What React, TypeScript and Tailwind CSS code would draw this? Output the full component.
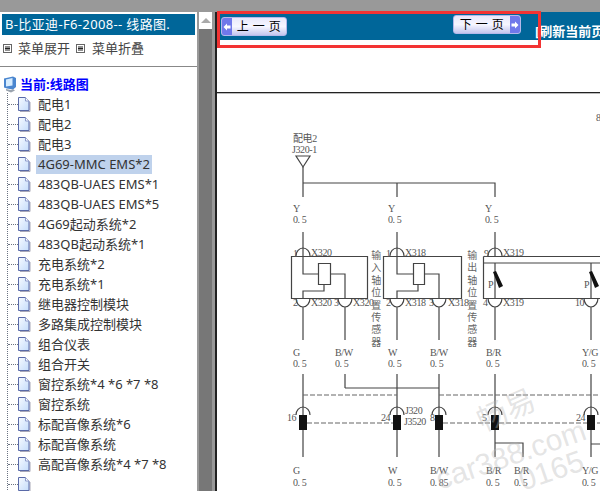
const cjk = "font-['Tahoma','Noto_Sans','Noto_Sans_CJK_SC',sans-serif]"

const treeItems = [
  "配电1",
  "配电2",
  "配电3",
  "4G69-MMC EMS*2",
  "483QB-UAES EMS*1",
  "483QB-UAES EMS*5",
  "4G69起动系统*2",
  "483QB起动系统*1",
  "充电系统*2",
  "充电系统*1",
  "继电器控制模块",
  "多路集成控制模块",
  "组合仪表",
  "组合开关",
  "窗控系统*4 *6 *7 *8",
  "窗控系统",
  "标配音像系统*6",
  "标配音像系统",
  "高配音像系统*4 *7 *8",
  "",
]

function MenuIcon() {
  return (
    <svg width="9" height="9" viewBox="0 0 9 9" className="shrink-0">
      <rect x="0.5" y="0.5" width="8" height="8" fill="#fff" stroke="#666" />
      <path d="M2 3h5M2 4.500h5M2 6h5" stroke="#222" />
    </svg>
  )
}

function DocIcon() {
  return (
    <svg width="13" height="15" viewBox="0 0 13 15" className="shrink-0">
      <defs>
        <linearGradient id="docFill" x1="0" y1="0" x2="1" y2="1">
          <stop offset="0" stopColor="#f6faff" />
          <stop offset="1" stopColor="#c4dcfb" />
        </linearGradient>
      </defs>
      <path d="M2 14.500h10V5" fill="none" stroke="#a9a9b8" />
      <path d="M0.500 0.500h7l3.500 3.500v9.500h-10.500z" fill="url(#docFill)" stroke="#5a6aa8" />
      <path d="M7.500 0.500v3.500h3.500" fill="#fff" stroke="#8f9ccc" />
    </svg>
  )
}

function RootIcon() {
  return (
    <svg width="14" height="17" viewBox="0 0 14 17" className="shrink-0">
      <path d="M1 2.500l9-2 3 1.500v9l-3 2.500-6-1-3-1z" fill="#4a86cf" />
      <path d="M3 3.500l6.500-1.500v7.500l-6.500 1z" fill="#d6ecff" />
      <path d="M3 13l5 1 2-1 2 1.500-4 2-5-2z" fill="#9aa3ae" />
    </svg>
  )
}

function TreeRow({ label, selected }: { label: string; selected: boolean }) {
  return (
    <div className="flex h-5 items-center">
      <div className="w-[10px] border-t border-dotted border-gray-500" />
      <DocIcon />
      <span className={`ml-[5px] px-[2px] text-[13px] leading-[19px] whitespace-nowrap text-[#333] ${selected ? "bg-[#bfd2ec]" : ""}`}>
        {label}
      </span>
    </div>
  )
}

function Sidebar() {
  return (
    <div className={`w-[197px] shrink-0 overflow-hidden bg-white pt-[2px] ${cjk}`}>
      <div className="mx-[2px] h-[21px] w-[193px] bg-[#006699] pl-[3px] text-[13px] leading-[21px] tracking-[0.35px] whitespace-nowrap text-white">
        B-比亚迪-F6-2008-- 线路图.
      </div>
      <div className="flex h-[27px] items-center pl-[3px] text-[13px] text-[#444]">
        <MenuIcon />
        <span className="ml-[6px]">菜单展开</span>
        <span className="ml-[6px]"><MenuIcon /></span>
        <span className="ml-[7px]">菜单折叠</span>
      </div>
      <div className="mt-[4px] h-[1px] bg-[#888]" />
      <div className="mt-[9px] flex h-[17px] items-center pl-[3px]">
        <RootIcon />
        <span className="ml-[3px] text-[13px] font-bold text-[#0000ff]">当前:线路图</span>
      </div>
      <div className="ml-[7px] border-l border-dotted border-gray-500 pt-[1px]">
        {treeItems.map((item, i) => (
          <TreeRow key={i} label={item} selected={i === 3} />
        ))}
      </div>
    </div>
  )
}

function Scrollbar() {
  return (
    <div className="flex w-[18px] shrink-0 bg-[#999]">
      <div className="ml-[2px] flex w-[13px] flex-col bg-white">
        <div className="flex h-[17px] items-center justify-center">
          <div className="h-0 w-0 border-x-[5px] border-b-[5px] border-x-transparent border-b-[#aaa]" />
        </div>
        <div className="flex-1 bg-[#777]" />
      </div>
    </div>
  )
}

function PageButton({ label, dir }: { label: string; dir: "prev" | "next" }) {
  const arrow = (
    <div className="flex h-full w-[10px] items-center justify-center bg-[#7078ea]">
      <svg width="8" height="8" viewBox="0 0 8 8">
        <path d={dir === "prev" ? "M0.500 4l3.500-3.500v2h3.500v3H4v2z" : "M7.500 4L4 0.500v2H0.500v3H4v2z"} fill="#fff" />
      </svg>
    </div>
  )
  return (
    <div className="flex h-[19px] items-center overflow-hidden rounded-[3px] border border-[#b4b8ea] bg-gradient-to-b from-[#e8e8fb] via-[#f6f6ff] to-[#c4c6ee]">
      {dir === "prev" && arrow}
      <span className="flex-1 text-center text-[12px] leading-none tracking-[0.5px] whitespace-nowrap text-black">{label}</span>
      {dir === "next" && arrow}
    </div>
  )
}

function Header() {
  return (
    <div className="flex h-7 bg-[#006699]">
      <div className="mt-[5px] ml-1 w-[66px] shrink-0">
        <PageButton label="上 一 页" dir="prev" />
      </div>
      <div className="mt-[3px] ml-[166px] w-[68px] shrink-0">
        <PageButton label="下 一 页" dir="next" />
      </div>
      <div className="mt-[11px] ml-[14px] shrink-0 text-[13px] leading-[16px] font-bold whitespace-nowrap text-white">[刷新当前页</div>
    </div>
  )
}

const wire = "#444"

type Label = [number, number, string]

const labels: Label[] = [
  [293, 142, "配电2"], [292, 153, "J320-1"],
  [293, 212, "Y"], [293, 223, "0. 5"], [388, 212, "Y"], [388, 223, "0. 5"], [485, 212, "Y"], [485, 223, "0. 5"],
  [293, 257, "1"], [311, 256, "X320"], [386, 257, "1"], [405, 256, "X318"], [484, 257, "9"], [503, 256, "X319"],
  [293, 306, "2"], [311, 306, "X320"], [334, 306, "3"], [353, 306, "X320"], [386, 306, "2"], [405, 306, "X318"],
  [429, 306, "3"], [448, 306, "X318"], [483, 306, "4"], [503, 306, "X319"], [575, 306, "10"],
  [293, 356, "G"], [293, 367, "0. 5"], [335, 356, "B/W"], [335, 367, "0. 5"], [388, 356, "W"], [388, 367, "0. 5"],
  [430, 356, "B/W"], [430, 367, "0. 5"], [486, 356, "B/R"], [486, 367, "0. 5"], [582, 356, "Y/G"], [582, 367, "0. 5"],
  [287, 421, "16"], [381, 421, "24"], [405, 414, "J320"], [404, 425, "J3520"], [430, 421, "8"], [482, 421, "5"], [576, 421, "24"],
  [293, 474, "G"], [293, 486, "0. 5"], [388, 474, "W"], [388, 486, "0. 5"], [430, 474, "B/W"], [430, 486, "0. 85"],
  [486, 474, "B/R"], [486, 486, "0. 5"], [514, 474, "B/R"], [514, 486, "0. 5"], [582, 474, "Y/G"], [582, 486, "0. 5"],
  [596, 121, "8"],
]

const sideText = [
  { x: 376, chars: "输入轴位置传感器" },
  { x: 472, chars: "输出轴位置传感器" },
]

const busX = [303, 397, 439, 495, 591]

function Diagram() {
  return (
    <svg width="383" height="397" viewBox="217 94 383 397" className="block">
      <g stroke={wire} strokeWidth="1.2" fill="none">
        <path d="M296 156h14l-7 11z" />
        <path d="M303 167v30M303 183h192v14M397 183v14" />
        <path d="M303 232v24M397 232v24M495 232v24" />
        <path d="M291.500 256.500h76v42h-76zM383.500 256.500h78v42h-78z" />
        <path d="M483.500 256.500H600M483.500 256.500v42H600M484 263h116" />
        <path d="M318.500 263.500h12v21h-12zM413.500 263.500h11v21h-11z" />
        <path d="M303 256v18h15M330 274h15v24M303 298v-7h21v-7" />
        <path d="M397 256v18h16M424 274h15v24M397 298v-7h21v-7" />
        <path d="M495 263v35M591 263v35" />
        {[303, 397, 495].map((x) => (
          <path key={x} d={`M${x - 7} 256a7 8 0 0 1 14 0`} />
        ))}
        {[303, 345, 397, 439, 495, 591].map((x) => (
          <path key={x} d={`M${x - 7} 298a7 9 0 0 0 14 0M${x} 307v33M${x} 374v${x === 345 ? 14 : 41}`} />
        ))}
        <path d="M345 388h94" />
        {busX.map((x) => (
          <path key={x} d={`M${x - 7} 415a7 8 0 0 1 14 0M${x} 430v27`} />
        ))}
        <path d="M495 443h28v14M591 444h9" />
        <path d="M303 395h94M439 395h161M307 423h86M443 423h157" stroke="#666" strokeDasharray="5 2" />
      </g>
      {busX.map((x) => (
        <rect key={x} x={x - 4} y="415" width="8" height="15" fill="#111" />
      ))}
      <path d="M493 272l3-1 7 15-4 2zM589 272l3-1 7 15-4 2z" fill="#111" />
      <g fontFamily="'Liberation Serif','Noto Sans CJK SC',serif" fontSize="10" letterSpacing="-0.4" fill="#555">
        {labels.map(([x, y, t], i) => (
          <text key={i} x={x} y={y}>{t}</text>
        ))}
        <text x="488" y="288">P</text>
        <text x="584" y="288">P</text>
        {sideText.map((col) =>
          col.chars.split("").map((c, i) => (
            <text key={col.x + c + i} x={col.x} y={259 + i * 12.4} textAnchor="middle" fontSize="10" fill="#666">{c}</text>
          ))
        )}
      </g>
      <g fontFamily="'Liberation Sans','Noto Sans CJK SC',sans-serif" fill="#bbb" fillOpacity="0.4">
        <text x="483" y="432" fontSize="30" transform="rotate(-24 483 432)">畅易</text>
        <text x="440" y="490" fontSize="30" transform="rotate(-19 440 490)">car388.com</text>
        <text x="523" y="491" fontSize="30" transform="rotate(-19 523 491)">0165</text>
      </g>
    </svg>
  )
}

export default function App() {
  return (
    <div className="relative flex h-[491px] w-[600px] flex-col overflow-hidden bg-white">
      <div className="h-3 shrink-0 bg-[#999]" />
      <div className="flex min-h-0 flex-1">
        <Sidebar />
        <Scrollbar />
        <div className="min-w-0 flex-1 overflow-hidden border-l-2 border-[#222]">
          <div className={cjk}><Header /></div>
          <div className="h-[52px]" />
          <div className="h-[2px] border-t border-[#222] bg-[#bbb]" />
          <Diagram />
        </div>
      </div>
      <div className="absolute top-[11px] left-[217px] h-[37px] w-[324px] border-[3px] border-[#f33333]" />
    </div>
  )
}
